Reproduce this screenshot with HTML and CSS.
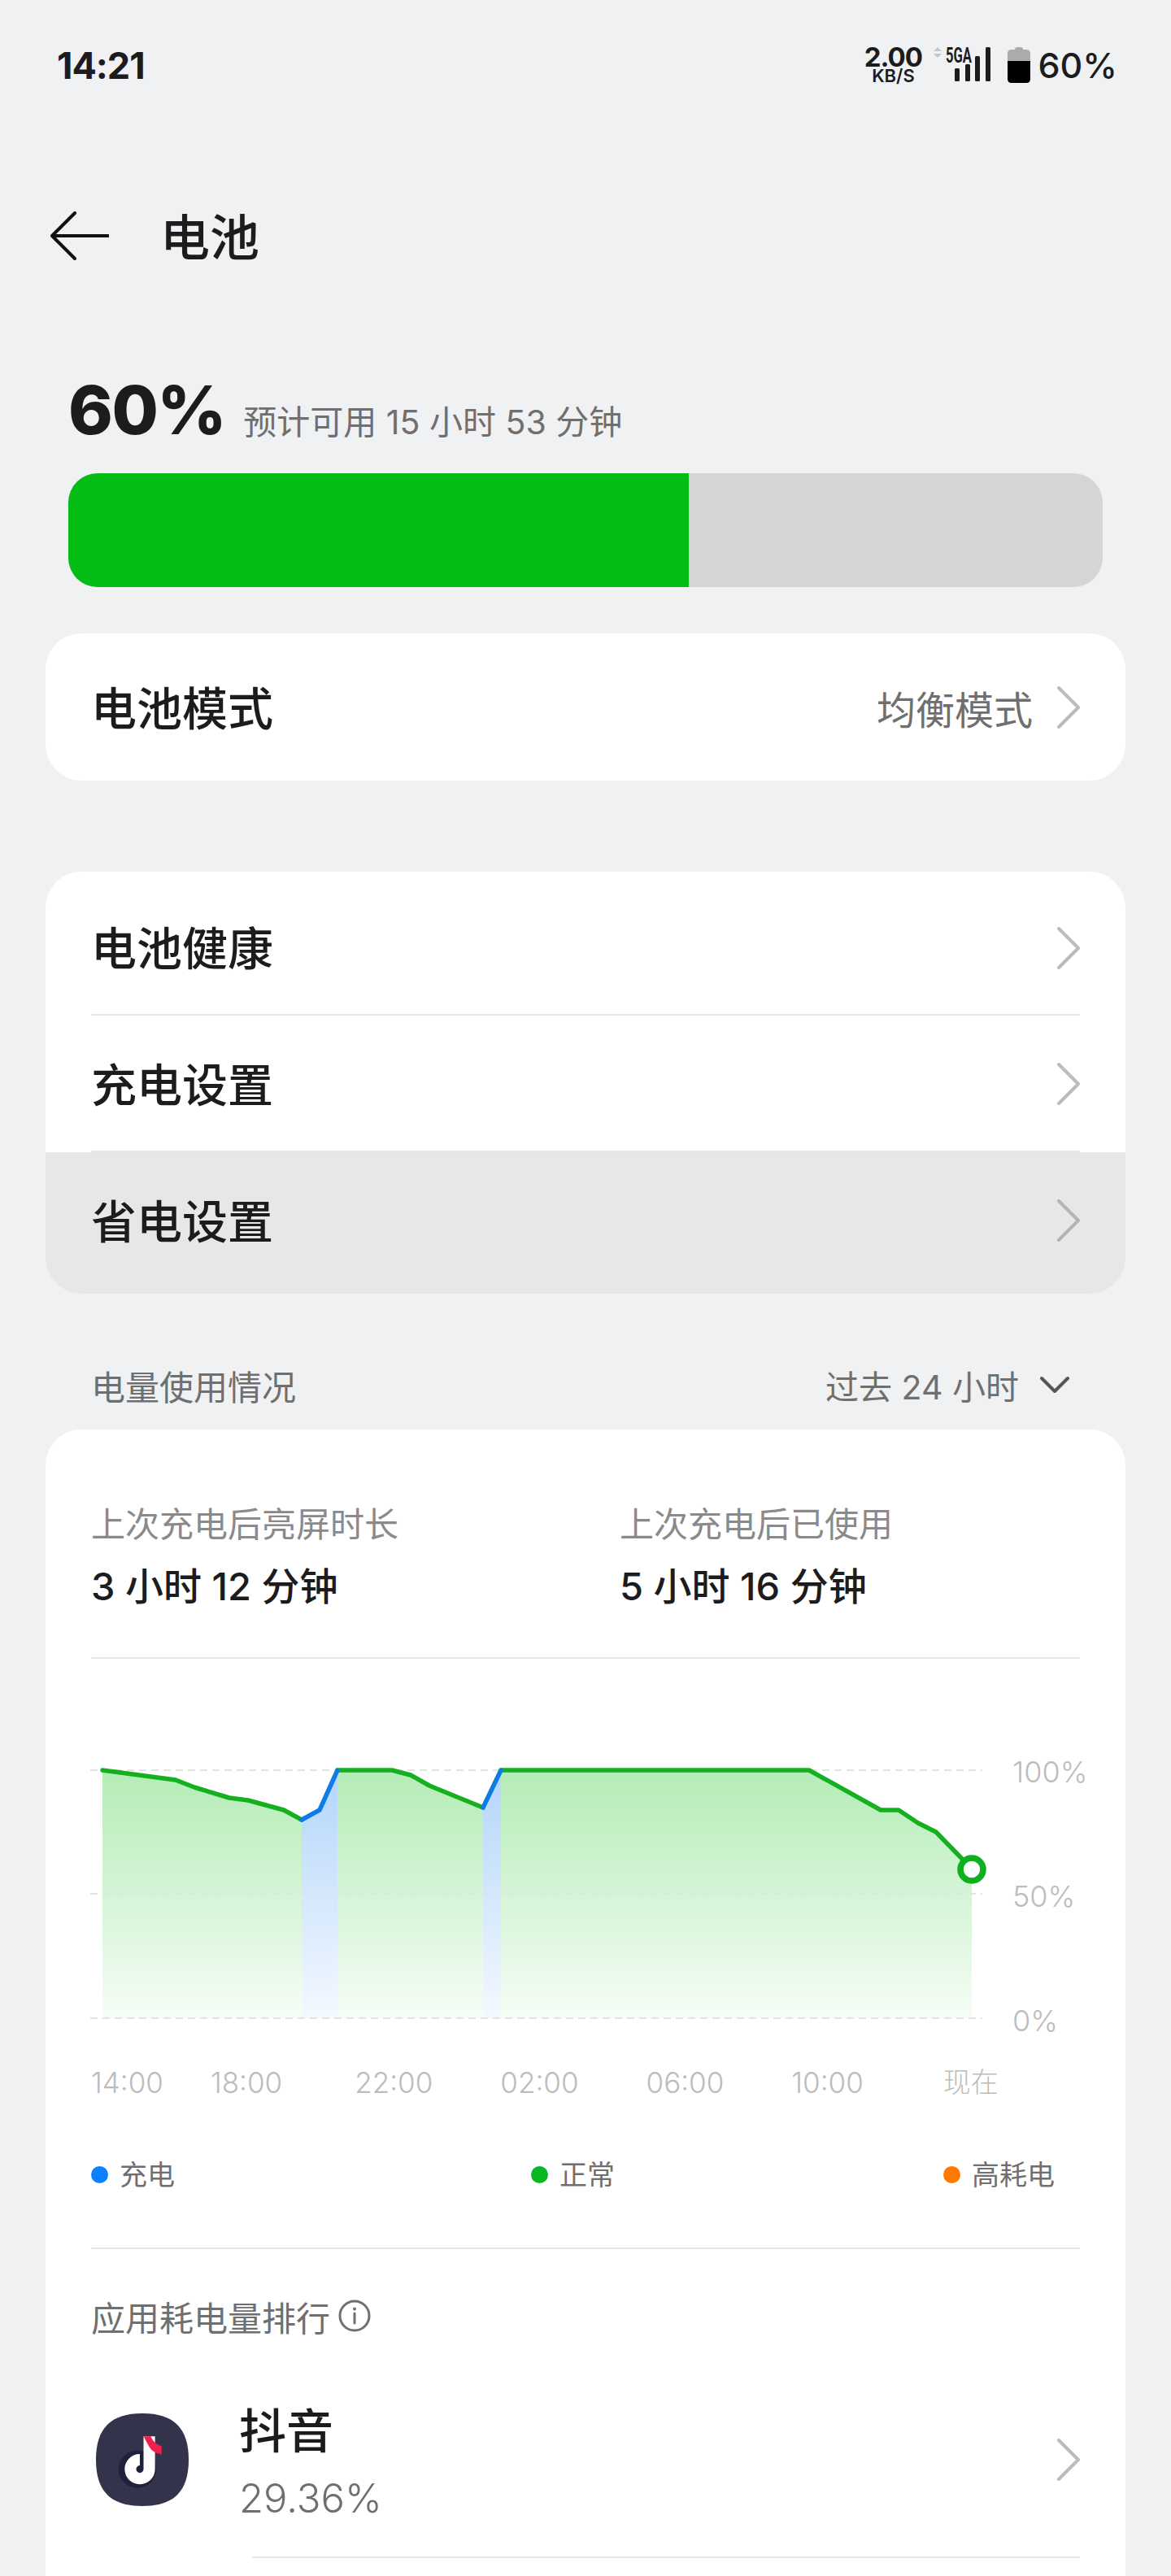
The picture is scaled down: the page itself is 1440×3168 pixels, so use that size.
FILE: index.html
```html
<!DOCTYPE html>
<html lang="zh-CN">
<head>
  <meta charset="UTF-8"/>
  <meta name="viewport" content="width=device-width, initial-scale=1.0"/>
  <title>电池</title>
  <link rel="stylesheet" href="styles.css">
</head>

<body>
<!-- Status bar -->
<div class="statusbar">
  <span class="time">14:21</span>
  <div class="status-right">
    <div class="speed"><b>2.00</b><span>KB/S</span></div>
    <svg class="signal" width="72" height="50" viewBox="0 -6 72 50">
      <path d="M6 0l5 5H1zM6 13L1 8h10z" fill="#c4c5c7"/>
      <text x="16" y="19" class="signal-text" textLength="32" lengthAdjust="spacingAndGlyphs">5GA</text>
      <rect x="27" y="26" width="6" height="16" rx="1.5" fill="#1c1c1e"/>
      <rect x="40" y="21" width="6" height="21" rx="1.5" fill="#1c1c1e"/>
      <rect x="52" y="11" width="6" height="31" rx="1.5" fill="#1c1c1e"/>
      <rect x="65" y="0" width="6" height="42" rx="1.5" fill="#1c1c1e"/>
    </svg>
    <svg class="batt" width="28" height="44" viewBox="0 0 28 44">
      <path d="M9 3q0-3 3-3h4q3 0 3 3h4q5 0 5 5v9H0V8q0-5 5-5z" fill="#ababab"/>
      <path d="M0 17h28v22q0 5-5 5H5q-5 0-5-5z" fill="#000"/>
    </svg>
    <span class="level">60%</span>
  </div>
</div>

<!-- Title -->
<header class="appbar">
  <svg class="back" width="72" height="60" viewBox="0 0 72 60">
    <path d="M71 30H3M30 2L2 30l28 28" fill="none" stroke="#111" stroke-width="4" stroke-linecap="round" stroke-linejoin="round"/>
  </svg>
  <h1>电池</h1>
</header>

<!-- Battery level -->
<section class="summary">
  <div class="summary-text">
    <strong>60%</strong>
    <span>预计可用 15 小时 53 分钟</span>
  </div>
  <div class="bar"><div class="bar-fill" style="width:60%"></div></div>
</section>

<div class="card mode-card">
  <div class="row">
    <span class="row-title">电池模式</span>
    <span class="row-value">均衡模式</span>
    <svg class="chev" width="28" height="52" viewBox="0 0 28 52"><path d="M2 2l24 24L2 50" fill="none" stroke="#bcbcbc" stroke-width="4" stroke-linecap="round" stroke-linejoin="round"/></svg>
  </div>
</div>

<div class="card list-card">
  <div class="row line">
    <span class="row-title">电池健康</span>
    <svg class="chev" width="28" height="52" viewBox="0 0 28 52"><path d="M2 2l24 24L2 50" fill="none" stroke="#bcbcbc" stroke-width="4" stroke-linecap="round" stroke-linejoin="round"/></svg>
  </div>
  <div class="row line">
    <span class="row-title">充电设置</span>
    <svg class="chev" width="28" height="52" viewBox="0 0 28 52"><path d="M2 2l24 24L2 50" fill="none" stroke="#bcbcbc" stroke-width="4" stroke-linecap="round" stroke-linejoin="round"/></svg>
  </div>
  <div class="row pressed">
    <span class="row-title">省电设置</span>
    <svg class="chev" width="28" height="52" viewBox="0 0 28 52"><path d="M2 2l24 24L2 50" fill="none" stroke="#b4b4b4" stroke-width="4" stroke-linecap="round" stroke-linejoin="round"/></svg>
  </div>
</div>

<!-- Usage -->
<div class="usage-head">
  <span>电量使用情况</span>
  <div class="range">
    <span>过去 24 小时</span>
    <svg width="36" height="24" viewBox="0 0 36 24"><path d="M2 4l16 16L34 4" fill="none" stroke="#555" stroke-width="4" stroke-linecap="round" stroke-linejoin="round"/></svg>
  </div>
</div>

<div class="card usage-card">
  <div class="stats">
    <div class="stat">
      <p>上次充电后亮屏时长</p>
      <b>3 小时 12 分钟</b>
    </div>
    <div class="stat">
      <p>上次充电后已使用</p>
      <b>5 小时 16 分钟</b>
    </div>
  </div>

  <div class="chart">
    <svg class="plot" width="1102" height="362" viewBox="111 2140 1102 362">
      <defs>
        <linearGradient id="greenFill" gradientUnits="userSpaceOnUse" x1="0" y1="2177" x2="0" y2="2482">
          <stop offset="0" stop-color="#b4ecb6"/>
          <stop offset="1" stop-color="#f6fdf6"/>
        </linearGradient>
        <linearGradient id="blueFill" gradientUnits="userSpaceOnUse" x1="0" y1="2177" x2="0" y2="2482">
          <stop offset="0" stop-color="#b3d5fb"/>
          <stop offset="1" stop-color="#f4f9ff"/>
        </linearGradient>
      </defs>
      <path d="M126 2177L216 2189 239 2198 282 2211 305 2214 349 2226 371 2238V2482H126z" fill="url(#greenFill)"/>
      <path d="M371 2238L393 2226 415 2177V2482H371z" fill="url(#blueFill)"/>
      <path d="M415 2177H482L505 2183 528 2196 594 2223V2482H415z" fill="url(#greenFill)"/>
      <path d="M594 2223L616 2177V2482H594z" fill="url(#blueFill)"/>
      <path d="M616 2177H995L1083 2226H1105L1129 2242 1151 2253 1184 2287 1195 2299V2482H616z" fill="url(#greenFill)"/>
      <g stroke="#e2e3e3" stroke-width="2" stroke-dasharray="9 6">
        <path d="M111 2177H1208M111 2329H1208M111 2482H1208"/>
      </g>
      <path d="M126 2177L216 2189 239 2198 282 2211 305 2214 349 2226 371 2238M415 2177H482L505 2183 528 2196 594 2223M616 2177H995L1083 2226H1105L1129 2242 1151 2253 1184 2287" fill="none" stroke="#14b020" stroke-width="5.500" stroke-linecap="round" stroke-linejoin="round"/>
      <path d="M371 2238L393 2226 415 2177M594 2223L616 2177" fill="none" stroke="#0f7ce6" stroke-width="5.500" stroke-linecap="round" stroke-linejoin="round"/>
      <circle cx="1195" cy="2299" r="14" fill="#fff" stroke="#0fb01e" stroke-width="7.500"/>
    </svg>
    <div class="y-labels">
      <span>100%</span>
      <span>50%</span>
      <span>0%</span>
    </div>
  </div>

  <div class="x-labels">
    <span>14:00</span>
    <span>18:00</span>
    <span>22:00</span>
    <span>02:00</span>
    <span>06:00</span>
    <span>10:00</span>
    <span>现在</span>
  </div>

  <div class="legend">
    <span class="key"><i class="dot charge"></i>充电</span>
    <span class="key"><i class="dot normal"></i>正常</span>
    <span class="key"><i class="dot high"></i>高耗电</span>
  </div>

  <div class="rank-head">
    <span>应用耗电量排行</span>
    <svg width="40" height="40" viewBox="0 0 40 40">
      <circle cx="20" cy="20" r="18" fill="none" stroke="#707070" stroke-width="3"/>
      <path d="M20 17v12" stroke="#707070" stroke-width="3" stroke-linecap="round"/>
      <circle cx="20" cy="11.500" r="2" fill="#707070"/>
    </svg>
  </div>

  <div class="app-row">
    <svg class="app-icon" width="114" height="114" viewBox="0 0 113 113">
      <path d="M56.500 0C95 0 113 18 113 56.500S95 113 56.500 113 0 95 0 56.500 18 0 56.500 0z" fill="#33344c"/>
      <circle cx="50.500" cy="68" r="23" fill="#20213a"/>
      <path d="M65 28V68a11.500 11.500 0 1 1-11.500-11.500" fill="none" stroke="#fff" stroke-width="14"/>
      <path d="M58 28h9c2 6 7 10 13 12v10c-7-1-12-4-15-9z" fill="#f2204f"/>
    </svg>
    <div class="app-text">
      <span class="app-name">抖音</span>
      <span class="app-pct">29.36%</span>
    </div>
    <svg class="chev" width="28" height="52" viewBox="0 0 28 52"><path d="M2 2l24 24L2 50" fill="none" stroke="#bcbcbc" stroke-width="4" stroke-linecap="round" stroke-linejoin="round"/></svg>
  </div>
</div>
</body>
</html>
```

FILE: styles.css
```css
:root{
  --bg:#f0f1f3;
  --card:#fff;
  --text:#1c1c1e;
  --muted:#6f6f6f;
  --faint:#bcbcbc;
  --line:#e6e6e7;
  --radius:44px;
}
*{margin:0;padding:0;box-sizing:border-box}
html,body{width:1440px;height:3168px;overflow:hidden}
body{background:var(--bg);color:var(--text);font-family:Inter,"Noto Sans CJK SC",sans-serif}

/* Status bar */
.statusbar{height:160px;padding:0 66px 0 70px;display:flex;align-items:center;justify-content:space-between}
.time{font-size:45px;font-weight:700;letter-spacing:-1px}
.status-right{display:flex;align-items:center}
.speed{display:flex;flex-direction:column;align-items:center;width:68px;margin-right:15px}
.speed b{font-size:33px;font-weight:700;letter-spacing:-1px;line-height:27px}
.speed span{font-size:22px;font-weight:600;line-height:19px}
.signal{margin:-6px 20px 0 0}
.signal-text{font-family:Roboto,sans-serif;font-size:25px;font-weight:700;fill:#1c1c1e}
.batt{margin-right:9px}
.level{font-size:43px;font-weight:500}

/* Title */
.appbar{height:256px;margin-bottom:4px;padding-left:62px;display:flex;align-items:center;gap:63px}
.appbar h1{font-size:61px;font-weight:500}
.back{margin-top:4px}

/* Level */
.summary{padding:0 84px}
.summary-text{height:162px;padding-top:34px;display:flex;align-items:baseline;gap:22px}
.summary-text strong{font-size:83px;font-weight:800;letter-spacing:-1.500px;line-height:100px}
.summary-text span{font-size:41px;color:var(--muted)}
.bar{height:140px;background:#d4d5d7;border-radius:36px;overflow:hidden}
.bar-fill{height:100%;background:#03bd15}

/* Cards */
.card{background:var(--card);border-radius:var(--radius);margin:0 56px;overflow:hidden}
.row{display:flex;align-items:center;padding:0 56px}
.row-title{font-size:56px;font-weight:500;flex:1;margin-top:-4px}
.row-value{font-size:48px;color:var(--muted);margin-right:30px}
.mode-card{margin-top:57px}
.mode-card .row{height:181px}
.list-card{margin-top:112px}
.list-card .row{height:168px}
.list-card .row .row-title{margin-top:-6px}
.list-card .row:first-child{height:177px;padding-top:10px}
.list-card .row.line{position:relative}
.list-card .row.line::after{content:"";position:absolute;left:56px;right:56px;bottom:0;height:2px;background:var(--line)}
.list-card .row.pressed{height:174px;padding-bottom:6px;background:#e7e7e8}

/* Usage */
.usage-head{height:167px;padding:57px 69px 0 56px;margin:0 56px;display:flex;justify-content:space-between;align-items:center;font-size:42px;color:var(--muted)}
.range{display:flex;align-items:center;gap:26px;font-size:41px}
.usage-card{height:1500px;padding:0 56px}
.stats{display:flex;height:282px;padding-top:87px;border-bottom:2px solid var(--line)}
.stat{width:650px;flex:none}
.stat p{font-size:42px;color:#8a8a8a;line-height:60px}
.stat b{display:block;margin-top:14px;font-size:47px;font-weight:500;line-height:64px}

.chart{display:flex;margin-top:100px;margin-left:-1px}
.plot{display:block;flex:none}
.y-labels{display:flex;flex-direction:column;gap:109px;padding:17px 0 0 32px;font-size:36px;font-weight:300;line-height:44px;color:var(--faint)}
.x-labels{display:flex;align-items:center;gap:83px;margin-top:32px;font-size:35px;font-weight:300;line-height:44px;color:var(--faint)}
.x-labels span:first-child{margin-right:-25px}
.x-labels span:nth-child(2){margin-right:6px}
.x-labels span:last-child{margin-left:15px;font-size:34px}

.legend{display:grid;grid-template-columns:541px 507px auto;height:183px;padding-top:70px;border-bottom:2px solid var(--line);font-size:34px;color:var(--muted)}
.key{display:flex;align-items:flex-start;gap:14px;line-height:44px}
.dot{width:21px;height:21px;border-radius:50%;margin-top:11px}
.dot.charge{background:#0d80ff}
.dot.normal{background:#09b821}
.dot.high{background:#ff7a00}

.rank-head{display:flex;align-items:center;gap:10px;height:60px;margin-top:52px;font-size:42px;color:var(--muted)}
.app-row{position:relative;display:flex;align-items:center;height:238px;margin-top:30px}
.app-row::after{content:"";position:absolute;left:198px;right:0;bottom:0;height:2px;background:var(--line)}
.app-icon{margin:-4px 62px 0 6px;flex:none}
.app-row .chev{margin-top:-4px}
.app-text{flex:1;display:flex;flex-direction:column;padding-top:10px}
.app-name{font-size:58px;font-weight:500;line-height:82px}
.app-pct{font-size:49px;font-weight:300;color:var(--muted);line-height:84px}
```
